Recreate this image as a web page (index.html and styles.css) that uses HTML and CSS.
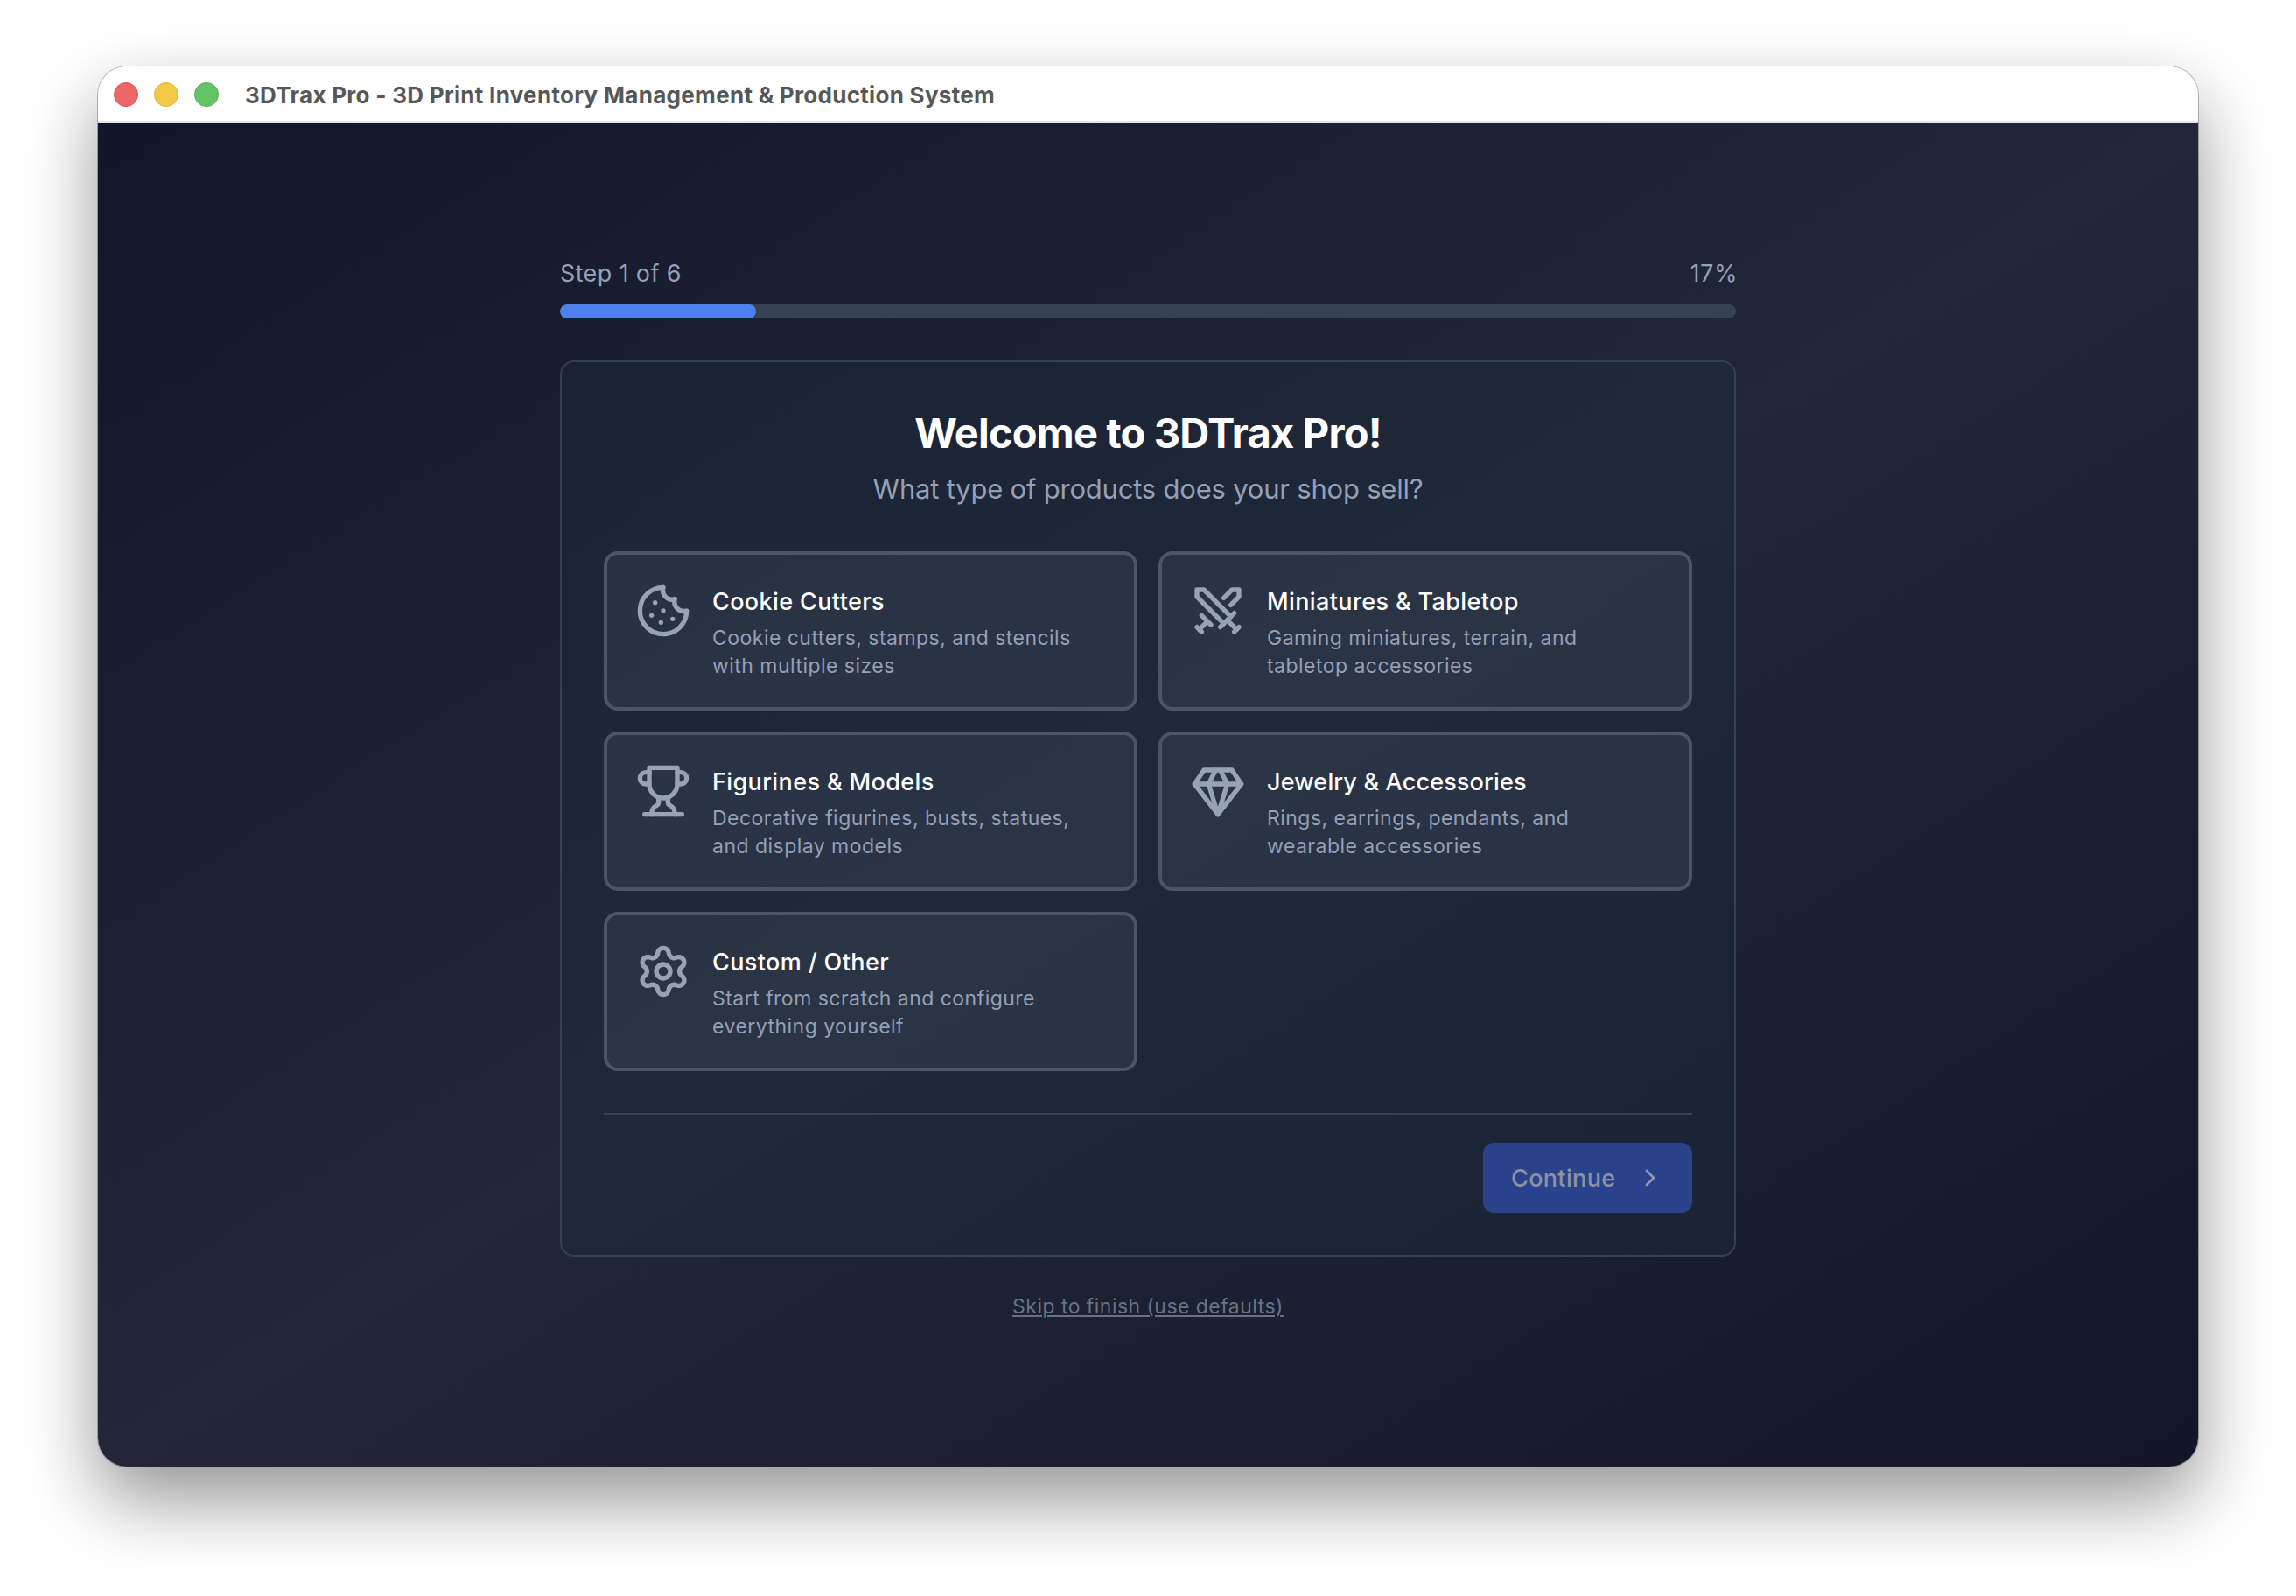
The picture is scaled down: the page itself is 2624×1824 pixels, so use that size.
FILE: index.html
```html
<!DOCTYPE html>
<html lang="en">
<head>
<meta charset="utf-8">
<title>3DTrax Pro</title>
<link rel="stylesheet" href="styles.css">
</head>
<body>
<div class="window">
  <header class="titlebar">
    <div class="lights">
      <span class="light light-close"></span>
      <span class="light light-min"></span>
      <span class="light light-max"></span>
    </div>
    <span class="window-title">3DTrax Pro - 3D Print Inventory Management &amp; Production System</span>
  </header>
  <main class="stage">
    <div class="wizard">
      <div class="progress-head"><span>Step 1 of 6</span><span class="percent">17%</span></div>
      <div class="track"><div class="fill" style="width: 16.667%"></div></div>

      <section class="card">
        <h1 class="heading">Welcome to 3DTrax Pro!</h1>
        <p class="subheading">What type of products does your shop sell?</p>

        <div class="options">
          <button class="option">
            <svg class="icon" viewBox="0 0 24 24"><path d="M12 2a10 10 0 1 0 10 10 4 4 0 0 1-5-5 4 4 0 0 1-5-5"/><path d="M8.5 8.5v.01"/><path d="M16 15.5v.01"/><path d="M12 12v.01"/><path d="M11 17v.01"/><path d="M7 14v.01"/></svg>
            <span class="option-text">
              <span class="option-name">Cookie Cutters</span>
              <span class="option-desc">Cookie cutters, stamps, and stencils<br>with multiple sizes</span>
            </span>
          </button>
          <button class="option">
            <svg class="icon" viewBox="0 0 24 24"><polyline points="14.5 17.5 3 6 3 3 6 3 17.5 14.5"/><line x1="13" x2="19" y1="19" y2="13"/><line x1="16" x2="20" y1="16" y2="20"/><line x1="19" x2="21" y1="21" y2="19"/><polyline points="14.5 6.5 18 3 21 3 21 6 17.5 9.5"/><line x1="5" x2="9" y1="14" y2="18"/><line x1="7" x2="4" y1="17" y2="20"/><line x1="3" x2="5" y1="19" y2="21"/></svg>
            <span class="option-text">
              <span class="option-name">Miniatures &amp; Tabletop</span>
              <span class="option-desc">Gaming miniatures, terrain, and<br>tabletop accessories</span>
            </span>
          </button>
          <button class="option">
            <svg class="icon" viewBox="0 0 24 24"><path d="M6 9H4.5a2.5 2.5 0 0 1 0-5H6"/><path d="M18 9h1.5a2.5 2.5 0 0 0 0-5H18"/><path d="M4 22h16"/><path d="M10 14.66V17c0 .55-.47.98-.97 1.21C7.85 18.75 7 20.24 7 22"/><path d="M14 14.66V17c0 .55.47.98.97 1.21C16.15 18.75 17 20.24 17 22"/><path d="M18 2H6v7a6 6 0 0 0 12 0V2Z"/></svg>
            <span class="option-text">
              <span class="option-name">Figurines &amp; Models</span>
              <span class="option-desc">Decorative figurines, busts, statues,<br>and display models</span>
            </span>
          </button>
          <button class="option">
            <svg class="icon" viewBox="0 0 24 24"><path d="M6 3h12l4 6-10 13L2 9Z"/><path d="M11 3 8 9l4 13 4-13-3-6"/><path d="M2 9h20"/></svg>
            <span class="option-text">
              <span class="option-name option-name-tight">Jewelry &amp; Accessories</span>
              <span class="option-desc">Rings, earrings, pendants, and<br>wearable accessories</span>
            </span>
          </button>
          <button class="option">
            <svg class="icon" viewBox="0 0 24 24"><path d="M9.671 4.136a2.34 2.34 0 0 1 4.659 0 2.34 2.34 0 0 0 3.319 1.915 2.34 2.34 0 0 1 2.33 4.033 2.34 2.34 0 0 0 0 3.831 2.34 2.34 0 0 1-2.33 4.033 2.34 2.34 0 0 0-3.319 1.915 2.34 2.34 0 0 1-4.659 0 2.34 2.34 0 0 0-3.32-1.915 2.34 2.34 0 0 1-2.33-4.033 2.34 2.34 0 0 0 0-3.831A2.34 2.34 0 0 1 6.35 6.051a2.34 2.34 0 0 0 3.319-1.915"/><circle cx="12" cy="12" r="3"/></svg>
            <span class="option-text">
              <span class="option-name">Custom / Other</span>
              <span class="option-desc">Start from scratch and configure<br>everything yourself</span>
            </span>
          </button>
        </div>

        <footer class="actions">
          <button class="continue">
            <span>Continue</span>
            <svg class="chevron" viewBox="0 0 24 24"><path d="m9 18 6-6-6-6"/></svg>
          </button>
        </footer>
      </section>

      <a class="skip">Skip to finish (use defaults)</a>
    </div>
  </main>
</div>
</body>
</html>
```
FILE: styles.css
```css
* { box-sizing: border-box; }

body {
  margin: 0;
  width: 2624px;
  height: 1824px;
  padding: 76px 112px 148px;
  background: #fff;
  font-family: Inter, "Liberation Sans", sans-serif;
  overflow: hidden;
}

button {
  margin: 0;
  font: inherit;
  color: inherit;
  text-align: left;
}

.window {
  display: flex;
  flex-direction: column;
  width: 2400px;
  height: 1600px;
  border-radius: 33px;
  box-shadow: 0 0 0 1px rgba(0, 0, 0, .25), 0 38px 84px rgba(0, 0, 0, .42);
}

.titlebar {
  display: flex;
  align-items: center;
  height: 64px;
  padding: 0 18px;
  background: #fff;
  border-bottom: 2px solid #e3e5e8;
  border-radius: 33px 33px 0 0;
}

.lights { display: flex; gap: 18px; padding-top: 2px; }
.light { width: 28px; height: 28px; border-radius: 50%; border: 1px solid; }
.light-close { background: #ec6765; border-color: #d9504f; }
.light-min { background: #f1c945; border-color: #dfb534; }
.light-max { background: #65c466; border-color: #4eb150; }

.window-title {
  margin-left: 30px;
  padding-top: 4px;
  font-size: 26px;
  font-weight: 700;
  line-height: 32px;
  letter-spacing: .292px;
  color: #575757;
}

.stage {
  flex: 1;
  display: flex;
  justify-content: center;
  align-items: flex-start;
  padding-top: 152px;
  background: linear-gradient(to bottom right, #111629, #212739 50%, #111629);
  border-radius: 0 0 33px 33px;
}

.wizard {
  display: flex;
  flex-direction: column;
  width: 1344px;
}

.progress-head {
  display: flex;
  justify-content: space-between;
  margin-bottom: 14px;
  font-size: 27px;
  line-height: 42px;
  letter-spacing: .36px;
  color: #959fb5;
}
.percent { margin-right: -2px; letter-spacing: .6px; }

.track {
  height: 16px;
  margin-bottom: 48px;
  border-radius: 8px;
  background: #364152;
  overflow: hidden;
}
.fill { height: 100%; border-radius: 8px; background: #4e81ee; }

.card {
  padding: 48px;
  border: 2px solid #364152;
  border-radius: 16px;
  background: rgba(30, 41, 57, .5);
}

.heading {
  margin: 0 0 6px;
  font-size: 47px;
  font-weight: 700;
  line-height: 66px;
  letter-spacing: -.8px;
  text-align: center;
  color: #fff;
}

.subheading {
  margin: 0 0 46px;
  font-size: 31px;
  line-height: 50px;
  letter-spacing: -.21px;
  text-align: center;
  color: #959fb5;
}

.options {
  display: grid;
  grid-template-columns: 1fr 1fr;
  gap: 24px;
  margin-bottom: 48px;
}

.option {
  display: flex;
  align-items: flex-start;
  gap: 24px;
  height: 182px;
  padding: 32px;
  border: 4px solid #4b5566;
  border-radius: 16px;
  background: rgba(54, 63, 82, .5);
}

.icon, .chevron {
  flex: none;
  fill: none;
  stroke: #96a3b7;
  stroke-width: 2;
  stroke-linecap: round;
  stroke-linejoin: round;
}
.icon { width: 64px; height: 64px; }

.option-text { display: flex; flex-direction: column; gap: 3px; }

.option-name {
  font-size: 27px;
  font-weight: 500;
  line-height: 44px;
  letter-spacing: .38px;
  color: #fff;
}
.option-name-tight { letter-spacing: .16px; }

.option-desc {
  font-size: 23px;
  line-height: 32px;
  letter-spacing: .47px;
  color: #959fb5;
}

.actions {
  display: flex;
  justify-content: flex-end;
  padding-top: 32px;
  border-top: 2px solid #364152;
}

.continue {
  display: flex;
  align-items: center;
  justify-content: space-between;
  width: 239px;
  height: 80px;
  padding: 0 32px;
  border: 0;
  border-radius: 12px;
  background: #29428b;
  font-size: 27px;
  font-weight: 500;
  letter-spacing: .34px;
  color: #8a92a3;
}
.chevron { width: 32px; height: 32px; stroke: #8f97a8; }

.skip {
  align-self: center;
  margin-top: 40px;
  font-size: 23px;
  line-height: 34px;
  letter-spacing: .46px;
  color: #687286;
  text-decoration: underline;
  text-decoration-thickness: 2px;
  text-underline-offset: 2px;
}
```
